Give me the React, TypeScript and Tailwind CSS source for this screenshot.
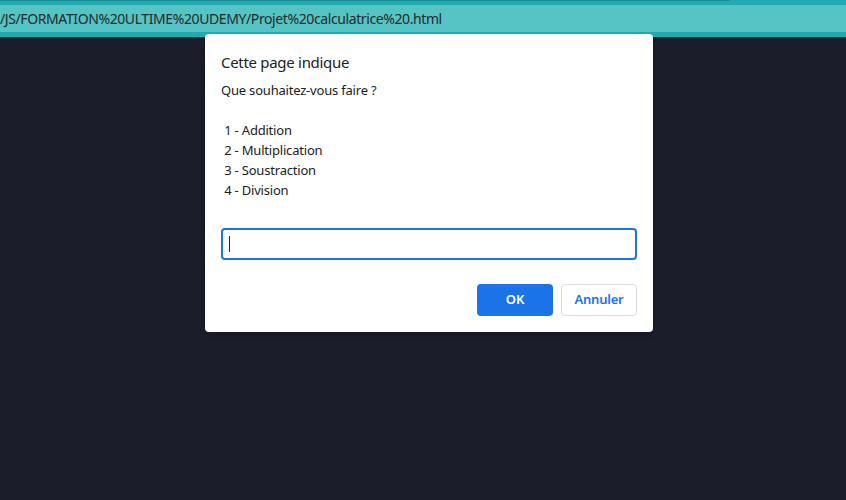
export default function App() {
  const message =
    "Que souhaitez-vous faire ?\n\n 1 - Addition\n 2 - Multiplication\n 3 - Soustraction\n 4 - Division";

  return (
    <div
      className="relative flex h-[500px] w-[846px] flex-col overflow-hidden bg-[#1b1d2a]"
      style={{ fontFamily: '"Noto Sans", "Open Sans", sans-serif' }}
    >
      <div className="flex h-[5px] flex-col bg-[#21abb0]">
        <div className="h-[1px] w-[730px] bg-[#168e94]" />
      </div>
      <div className="flex h-[27px] items-center bg-[#56c3c4]">
        <span className="text-[14px] leading-none tracking-[-0.4px] text-[#1d2b2e]">
          /JS/FORMATION%20ULTIME%20UDEMY/Projet%20calculatrice%20.html
        </span>
      </div>
      <div className="h-[5px] bg-[#21abb0]" />

      <div className="absolute left-[205px] top-[34px] flex w-[448px] flex-col rounded-[4px] bg-white px-4 pb-4 pt-[18px] shadow-md">
        <div className="text-[15px] leading-[20px] tracking-[-0.3px] text-[#202124]">
          Cette page indique
        </div>
        <div className="mt-2 whitespace-pre-wrap text-[13px] leading-[20px] tracking-[-0.2px] text-[#202124]">
          {message}
        </div>
        <div className="mt-[28px] flex h-8 items-center rounded-[4px] border-2 border-[#1a73e8] px-[6px]">
          <div className="h-[16px] w-[1px] bg-[#202124]" />
        </div>
        <div className="mt-6 flex justify-end gap-2">
          <button className="h-8 w-[76px] rounded-[4px] bg-[#1a73e8] text-[13px] font-semibold text-white">
            OK
          </button>
          <button className="h-8 w-[76px] rounded-[4px] border border-[#dadce0] bg-white text-[13px] font-semibold tracking-[-0.2px] text-[#1a73e8]">
            Annuler
          </button>
        </div>
      </div>
    </div>
  );
}
